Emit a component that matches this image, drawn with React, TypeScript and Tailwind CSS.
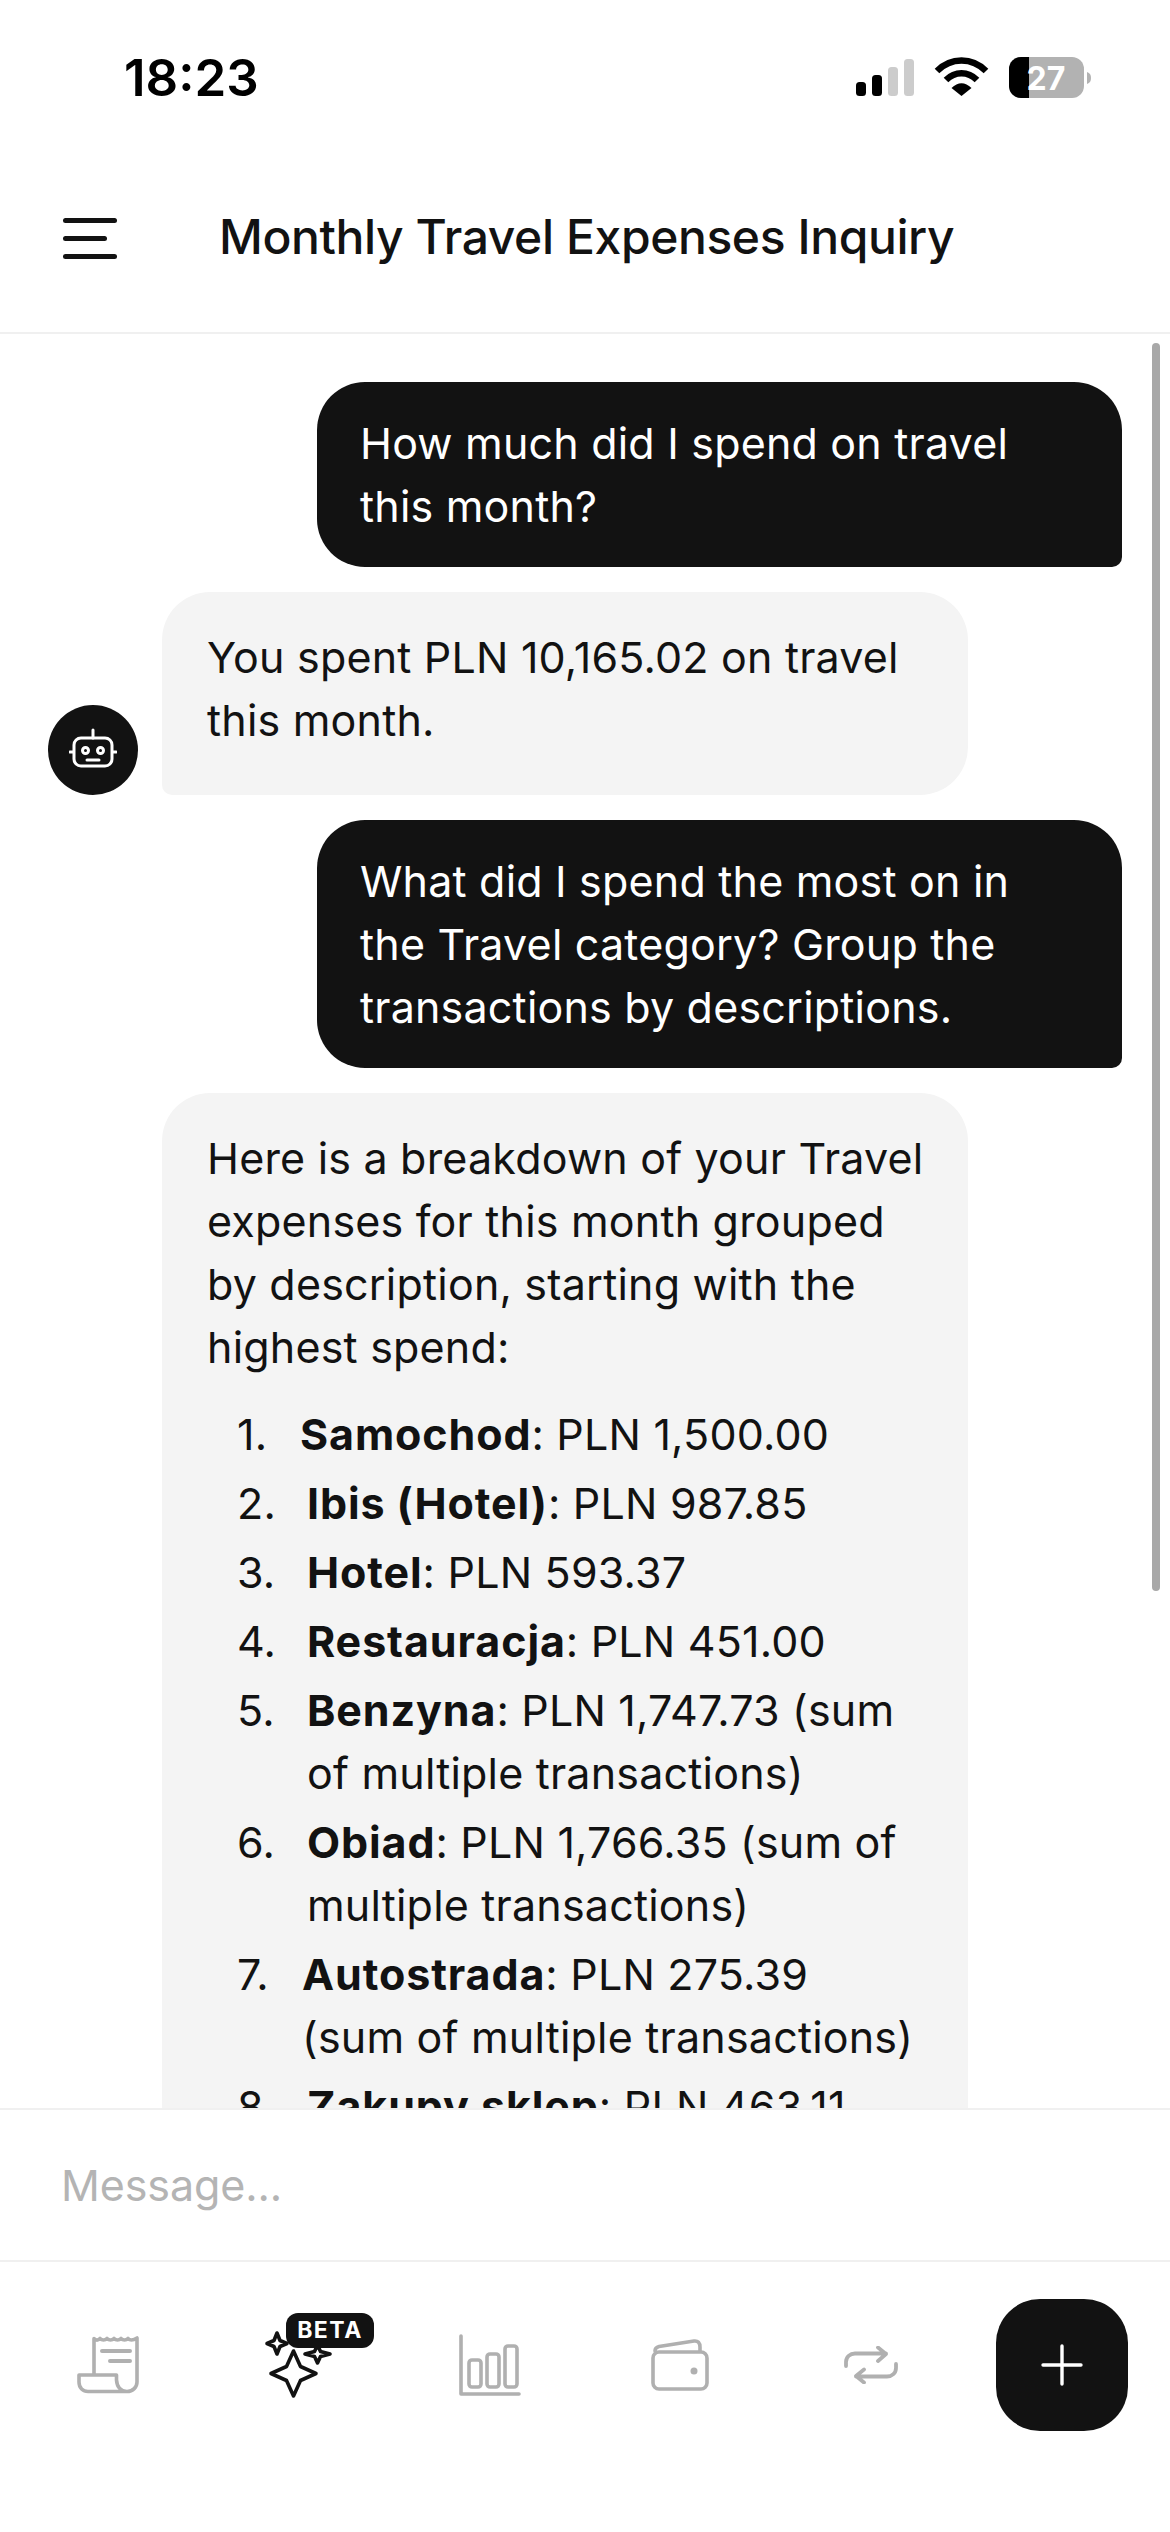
import React from "react";

const items: { n: string; b: string; t: React.ReactNode; pl: string; num?: string }[] = [
  { n: "1.", b: "Samochod", t: ": PLN 1,500.00", pl: "pl-[63px]" },
  { n: "2.", b: "Ibis (Hotel)", t: ": PLN 987.85", pl: "pl-[70px]" },
  { n: "3.", b: "Hotel", t: ": PLN 593.37", pl: "pl-[70px]" },
  { n: "4.", b: "Restauracja", t: ": PLN 451.00", pl: "pl-[70px]" },
  { n: "5.", b: "Benzyna", t: <>: PLN 1,747.73 (sum<br />of multiple transactions)</>, pl: "pl-[70px]" },
  { n: "6.", b: "Obiad", t: <>: PLN 1,766.35 (sum of<br />multiple transactions)</>, pl: "pl-[70px]" },
  { n: "7.", b: "Autostrada", t: <>: PLN 275.39<br />(sum of multiple transactions)</>, pl: "pl-[65px]" },
  { n: "8.", b: "Zakupy sklep", t: ": PLN 463.11", pl: "pl-[70px]" },
];

function Status() {
  return (
    <div className="h-[134px] flex items-start justify-between pl-[124px] pr-[79px] pt-[48px]">
      <span className="text-[51px] leading-[60px] font-semibold text-black">18:23</span>
      <svg width="235" height="42" viewBox="0 0 235 42" className="mt-[9px]">
        <rect x="0" y="25" width="10" height="14" rx="3.5" fill="#000" />
        <rect x="16" y="18" width="10" height="21" rx="3.5" fill="#000" />
        <rect x="32" y="10" width="10" height="29" rx="3.5" fill="#ccc" />
        <rect x="48" y="2" width="10" height="37" rx="3.5" fill="#ccc" />
        <path d="M81 14 C95 0 116 0 130 14" fill="none" stroke="#000" strokeWidth="6.5" />
        <path d="M90 23 C99 14 112 14 121 23" fill="none" stroke="#000" strokeWidth="6.5" />
        <path d="M95.5 31 C102 24.500 109 24.500 115.500 31 L105.500 39 Z" fill="#000" />
        <rect x="153" y="0" width="75" height="41" rx="12" fill="#b2b2b2" />
        <path d="M165 0 H173 V41 H165 A12 12 0 0 1 153 29 V12 A12 12 0 0 1 165 0 Z" fill="#000" />
        <path d="M231 15 C234 16 235 18 235 21 C235 24 234 26 231 27 Z" fill="#b2b2b2" />
        <text x="190" y="33" textAnchor="middle" fontSize="32" fontWeight="700" fill="#fff" fontFamily="Inter, sans-serif">27</text>
      </svg>
    </div>
  );
}

function Robot() {
  return (
    <svg width="48" height="44" viewBox="0 0 48 44" fill="none" stroke="#fff" strokeWidth="3" strokeLinecap="round" strokeLinejoin="round">
      <rect x="5" y="10" width="38" height="28" rx="7" />
      <path d="M24 2V10M1 24H4.500M43.500 24H47M18 32H30" />
      <circle cx="16.500" cy="22.500" r="3" />
      <circle cx="31.500" cy="22.500" r="3" />
    </svg>
  );
}

const grey = "#b0b0b0";

function Tabs() {
  return (
    <div className="flex-1 bg-white border-t-2 border-[#f0f0f0] px-[13px] pt-[37px]">
      <div className="grid grid-cols-6 items-center justify-items-center h-[132px]">
        <svg width="62" height="58" viewBox="0 0 62 58" fill="none" stroke={grey} strokeWidth="3.600" strokeLinecap="round" strokeLinejoin="round">
          <path d="M17 39V2.500C19 4.500 21 4.500 23 2.500C25 4.500 28 4.500 30 2.500C32 4.500 35 4.500 37 2.500C39 4.500 42 4.500 44 2.500C46 4.500 49 4.500 51 2.500C53 4.500 56 4.500 60 2V46C60 51 56 55.500 50 55.500C44 55.500 40 51 39.500 44V39H2V46C2 52 6 55.500 11 55.500H50" />
          <path d="M25 15H53M33 25H53" strokeWidth="4" />
        </svg>
        <div className="relative w-[62px] h-[58px]">
          <svg width="70" height="70" viewBox="0 0 70 70" fill="none" stroke="#121212" strokeWidth="3.600" strokeLinejoin="round" className="absolute left-[-4px] top-[-6px]">
            <path d="M29.500 21L36.500 36.500L52 43.500L36.500 50.500L29.500 66L22.500 50.500L7 43.500L22.500 36.500Z" />
            <path d="M13 3L16 10.500L23 13.500L16 16.500L13 24L10 16.500L3 13.500L10 10.500Z" />
            <path d="M53.500 15L56.500 21.500L66 24L56.500 26.500L53.500 33L50.500 26.500L41 24L50.500 21.500Z" />
          </svg>
          <span className="absolute left-[18px] top-[-23px] w-[88px] h-[35px] rounded-[12px] bg-[#121212] text-white text-[23px] leading-[35px] font-bold tracking-[1.500px] text-center">BETA</span>
        </div>
        <svg width="62" height="62" viewBox="0 0 62 62" fill="none" stroke={grey} strokeWidth="3.600" strokeLinecap="round" strokeLinejoin="round">
          <path d="M2 2V60H60" />
          <rect x="10" y="26" width="12" height="27" rx="3" />
          <rect x="28" y="20" width="12" height="33" rx="3" />
          <rect x="46" y="12" width="12" height="41" rx="3" />
        </svg>
        <svg width="58" height="52" viewBox="0 0 58 52" fill="none" stroke={grey} strokeWidth="3.600" strokeLinecap="round" strokeLinejoin="round">
          <rect x="2" y="13" width="54" height="37" rx="6" />
          <path d="M4 12C4 9.500 6 8 8 7.500L43 2C47 1.500 49 4 49 8V12" />
          <circle cx="43" cy="32" r="3.500" fill={grey} stroke="none" />
        </svg>
        <svg width="54" height="38" viewBox="0 0 54 38" fill="none" stroke={grey} strokeWidth="3.800" strokeLinecap="round" strokeLinejoin="round">
          <path d="M2 20V16C2 11 6 7.500 11 7.500H42M34 1.500L42 8L34 15" />
          <path d="M52 18V22C52 27 48 30.500 43 30.500H12M20 23.500L12 30L20 36.500" />
        </svg>
        <div className="w-[132px] h-[132px] rounded-[44px] bg-[#121212] flex items-center justify-center">
          <svg width="42" height="42" viewBox="0 0 42 42" stroke="#fff" strokeWidth="3.400" strokeLinecap="round">
            <path d="M21 2V40M2 21H40" />
          </svg>
        </div>
      </div>
    </div>
  );
}

export default function App() {
  return (
    <div className="w-[1170px] h-[2532px] bg-white flex flex-col overflow-hidden text-[#121212] font-['Inter',sans-serif]">
      <Status />
      <header className="h-[200px] border-b-2 border-[#f0f0f0] flex items-start pl-[63px] pt-[83px] shrink-0">
        <div className="w-[54px] flex flex-col gap-[13px] pt-[1px]">
          <div className="h-[5px] w-[54px] rounded-full bg-[#121212]" />
          <div className="h-[5px] w-[44px] rounded-full bg-[#121212]" />
          <div className="h-[5px] w-[54px] rounded-full bg-[#121212]" />
        </div>
        <h1 className="ml-[102px] text-[48px] leading-[40px] font-medium tracking-[-0.4px] whitespace-nowrap">Monthly Travel Expenses Inquiry</h1>
      </header>

      <main className="relative h-[1774px] shrink-0 overflow-hidden text-[43px] leading-[63px] tracking-[0.2px] whitespace-nowrap pt-[48px]">
        <div className="absolute right-[10px] top-[9px] w-[8px] h-[1248px] rounded-full bg-[#a8a8a8]" />
        <div className="flex flex-col gap-[25px]">
          <div className="ml-[317px] w-[805px] h-[185px] bg-[#121212] text-white rounded-[48px] rounded-br-[10px] px-[43px] pt-[30px]">
            How much did I spend on travel<br />this month?
          </div>
          <div className="flex items-end pl-[48px]">
            <div className="w-[90px] h-[90px] rounded-full bg-[#121212] flex items-center justify-center shrink-0">
              <Robot />
            </div>
            <div className="ml-[24px] w-[806px] h-[203px] bg-[#f4f4f4] rounded-[48px] rounded-bl-[10px] px-[45px] pt-[34px]">
              You spent PLN 10,165.02 on travel<br />this month.
            </div>
          </div>
          <div className="ml-[317px] w-[805px] h-[248px] bg-[#121212] text-white rounded-[48px] rounded-br-[10px] px-[43px] pt-[30px]">
            What did I spend the most on in<br />the Travel category? Group the<br />transactions by descriptions.
          </div>
          <div className="ml-[162px] w-[806px] bg-[#f4f4f4] rounded-t-[48px] px-[45px] pt-[34px] pb-[40px]">
            <p>
              Here is a breakdown of your Travel<br />expenses for this month grouped<br />by description, starting with the<br />highest spend:
            </p>
            <ol className="mt-[24px] flex flex-col gap-[6px] pl-[30px]">
              {items.map((it) => (
                <li key={it.n} className="relative">
                  <span className="absolute left-0 top-0">{it.n}</span>
                  <div className={it.pl}>
                    <b className="font-bold tracking-[0.9px]">{it.b}</b>
                    {it.t}
                  </div>
                </li>
              ))}
            </ol>
          </div>
        </div>
      </main>

      <div className="h-[152px] shrink-0 border-t-2 border-[#f0f0f0] bg-white flex items-center pl-[61px] text-[43px] tracking-[-0.1px] text-[#b4b4b4]">
        Message...
      </div>
      <Tabs />
    </div>
  );
}
